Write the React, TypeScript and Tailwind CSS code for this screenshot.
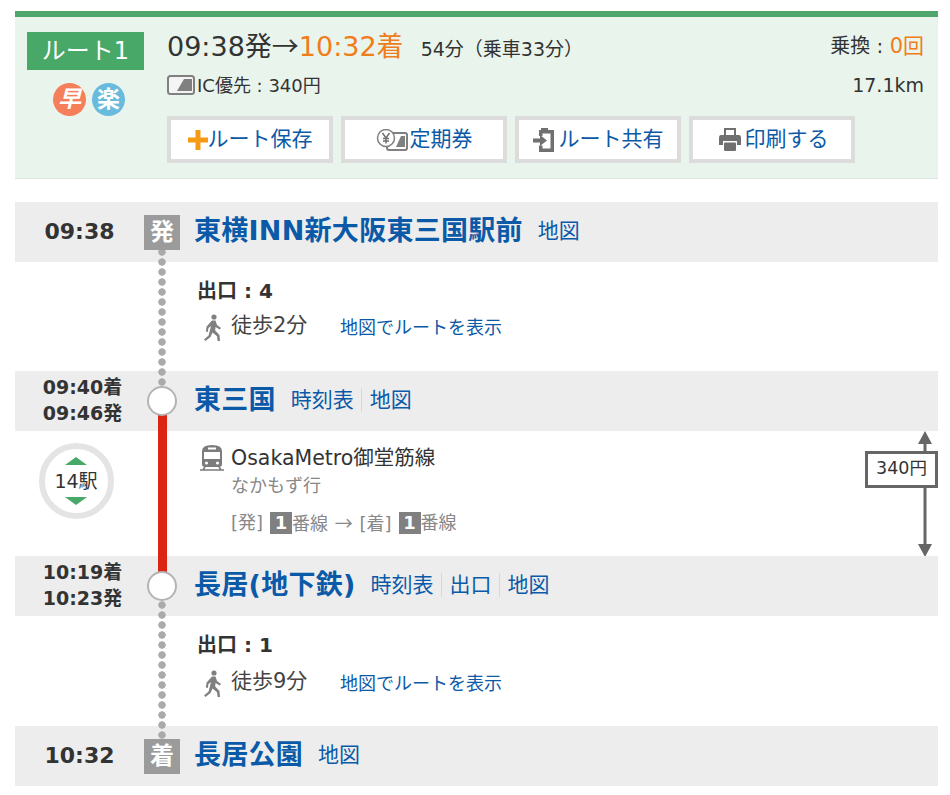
import { ReactNode } from 'react'

const font = "font-['DejaVu_Sans','Noto_Sans_CJK_JP',sans-serif]"
const cjk = "font-['Noto_Sans_CJK_JP',sans-serif]"
const link = 'text-[#0b5aa8]'

function IcCard({ className }: { className?: string }) {
  return (
    <svg viewBox="0 0 28 20" className={className}>
      <rect x="1" y="1" width="26" height="18" rx="2.5" fill="#f4f4f4" stroke="#808080" strokeWidth="2" />
      <path d="M10 16 L17 4 H25 V16 Z" fill="#808080" />
    </svg>
  )
}

function YenCard() {
  return (
    <svg viewBox="0 0 32 22" className="w-[32px] h-[22px]">
      <rect x="11" y="4" width="20" height="17" rx="2" fill="#fff" stroke="#808080" strokeWidth="2" />
      <path d="M20 18 L25 7 H29 V18 Z" fill="#808080" />
      <circle cx="10" cy="9" r="8.5" fill="#fff" stroke="#808080" strokeWidth="1.5" />
      <path d="M6.5 4 L10 9 L13.5 4 M10 9 V14.5 M7 9.5 H13 M7 12 H13" fill="none" stroke="#707070" strokeWidth="1.5" />
    </svg>
  )
}

function PlusIcon() {
  return (
    <svg viewBox="0 0 20 20" className="w-[20px] h-[20px]">
      <path d="M7.5 0 H12.5 V7.5 H20 V12.5 H12.5 V20 H7.5 V12.5 H0 V7.5 H7.5 Z" fill="#f59a14" />
    </svg>
  )
}

function ShareIcon() {
  return (
    <svg viewBox="0 0 21 24" className="w-[21px] h-[24px]">
      <path d="M6 2 H21 V24 H6 V17.5 H9.5 V20.5 H17.5 V5.5 H9.5 V8 H6 Z" fill="#707070" />
      <rect x="8" y="0" width="7" height="4" fill="#707070" />
      <path d="M0 10.5 H7 V7 L14 12.5 L7 18 V14.5 H0 Z" fill="#707070" />
    </svg>
  )
}

function PrinterIcon() {
  return (
    <svg viewBox="0 0 22 23" className="w-[22px] h-[23px]">
      <path d="M5 0 H17 V7 H20 Q22 7 22 10 V17 H18 V13 H4 V17 H0 V10 Q0 7 2 7 H5 Z" fill="#707070" />
      <rect x="7" y="2" width="8" height="5" fill="#fff" />
      <rect x="5" y="14.5" width="12" height="8.5" rx="1" fill="#707070" />
    </svg>
  )
}

function Walker() {
  return (
    <svg viewBox="0 0 18 27" className="w-[18px] h-[27px] shrink-0 mt-[3px] ml-[1px] -mr-[1px]" fill="#808080">
      <circle cx="10" cy="3" r="2.6" />
      <path d="M8 6.5 H11.5 L13 11 L17 14 L15.8 15.5 L11.5 13 L11.2 16.5 L15.5 21 L16 27 H13.6 L13 22.2 L8.6 18.5 L6.5 23 L1.5 27 L0 25.4 L4.6 21.5 L7 12 L4.5 14 L3.8 18 L1.8 17.6 L2.6 12.4 Z" />
    </svg>
  )
}

function Train() {
  return (
    <svg viewBox="0 0 24 27" className="w-[24px] h-[27px] shrink-0">
      <path d="M2 7 Q2 1 12 1 Q22 1 22 7 V20 Q22 23 19 23 H5 Q2 23 2 20 Z" fill="#7c7c7c" />
      <rect x="4" y="8" width="16" height="7" fill="#fff" />
      <rect x="8" y="3.5" width="8" height="2" fill="#fff" />
      <circle cx="6.5" cy="19" r="1.6" fill="#fff" />
      <circle cx="17.5" cy="19" r="1.6" fill="#fff" />
      <path d="M0 26 H24 M5 23 L3 26 M19 23 L21 26" stroke="#7c7c7c" strokeWidth="1.6" fill="none" />
    </svg>
  )
}

function HeaderButton({ icon, label, gap }: { icon: ReactNode; label: string; gap: string }) {
  return (
    <button className={`w-[166px] h-[47px] border-[4px] border-[#dcdcdc] bg-white flex items-center justify-center ${gap} text-[21px] ${link}`}>
      {icon}
      <span>{label}</span>
    </button>
  )
}

function Links({ items }: { items: string[] }) {
  return (
    <div className={`flex items-center text-[21px] ${link}`}>
      {items.map((item, i) => (
        <span key={item} className={i > 0 ? 'border-l border-[#d8d8d8] ml-[7px] pl-[8px] leading-[24px]' : 'leading-[24px]'}>
          {item}
        </span>
      ))}
    </div>
  )
}

function StationRow({ time, marker, name, links, twoLine }: { time: ReactNode; marker: ReactNode; name: string; links: string[]; twoLine?: boolean }) {
  return (
    <div className="relative h-[60px] bg-[#ededed] flex items-center">
      <div className={`w-[129px] pb-[2px] text-center font-bold text-[#333] ${twoLine ? 'pl-[6px] text-[19px] leading-[26px]' : 'text-[22px]'}`}>{time}</div>
      <div className="relative z-10 w-[36px] h-[35px] flex items-center justify-center">{marker}</div>
      <div className="ml-[14px] mr-[15px] pb-[2px] text-[27px] tracking-[0.01em] font-bold text-[#0b5aa8] whitespace-nowrap">{name}</div>
      <div className="pb-[2px]">
        <Links items={links} />
      </div>
    </div>
  )
}

function Square({ label }: { label: string }) {
  return (
    <div className="w-[36px] h-[35px] bg-[#9b9b9b] text-white text-[24px] font-bold flex items-center justify-center">
      {label}
    </div>
  )
}

function Ring() {
  return <div className="w-[30px] h-[30px] rounded-full bg-white border-2 border-[#b4b4b4]" />
}

function WalkSection({ exit, walk, height, dotsTop, gap }: { exit: string; walk: string; height: string; dotsTop: string; gap: string }) {
  return (
    <div className={`relative ${height} pl-[182px] pt-[15px]`}>
      <div className={`absolute z-[5] left-[143px] ${dotsTop} h-[140px] w-[8px] bg-[radial-gradient(circle,#aaaaaa_3.4px,transparent_4px)] bg-[length:8px_10px]`} />
      <div className="text-[20px] leading-[28px] font-bold text-[#333]">{exit}</div>
      <div className={`flex items-center ${gap} ml-[6px] h-[28px]`}>
        <Walker />
        <span className="ml-[10px] text-[21px] text-[#444] w-[109px]">{walk}</span>
        <span className={`pt-[2px] text-[18px] ${link}`}>地図でルートを表示</span>
      </div>
    </div>
  )
}

export default function App() {
  return (
    <div className={`min-h-[795px] w-[950px] bg-white pt-[11px] pl-[15px] pr-[12px] ${font} text-[#333]`}>
      {/* ROUTE SUMMARY */}
      <section className="h-[168px] border-t-[6px] border-t-[#4ea66c] border-b border-b-[#dde3de] bg-[#e9f5ec] flex pl-[12px] pr-[14px] pt-[15px]">
        <div className="w-[140px] shrink-0">
          <div className="w-[117px] h-[38px] bg-[#48a868] text-white text-[24px] flex items-center justify-center">
            ルート1
          </div>
          <div className="flex gap-[6px] mt-[13px] ml-[26px]">
            <div className="w-[33px] h-[33px] rounded-full bg-[#f57f5b] text-white text-[23px] font-bold italic flex items-center justify-center">
              早
            </div>
            <div className="w-[33px] h-[33px] rounded-full bg-[#68bbdc] text-white text-[23px] font-bold flex items-center justify-center">
              楽
            </div>
          </div>
        </div>

        <div className="flex-1">
          <div className="flex justify-between h-[30px] items-center">
            <div className="flex items-baseline">
              <span className="text-[27px] leading-[30px]">
                09:38発<span className={cjk}>→</span><span className="text-[#f07c1a]">10:32着</span>
              </span>
              <span className="ml-[17px] text-[19px]">54分（乗車33分）</span>
            </div>
            <div className="text-[20px]">
              乗換 : <span className="text-[21px] text-[#f07c1a]">0回</span>
            </div>
          </div>
          <div className="flex justify-between items-center h-[36px] mt-[5px]">
            <div className="flex items-center text-[18px]">
              <IcCard className="w-[28px] h-[20px] mr-[2px]" />
              <span>IC優先 : 340円</span>
            </div>
            <div className="text-[19px]">17.1km</div>
          </div>
          <div className="flex gap-[8px] mt-[13px]">
            <HeaderButton icon={<PlusIcon />} label="ルート保存" gap="gap-0" />
            <HeaderButton icon={<YenCard />} label="定期券" gap="gap-[2px]" />
            <HeaderButton icon={<ShareIcon />} label="ルート共有" gap="gap-[5px]" />
            <HeaderButton icon={<PrinterIcon />} label="印刷する" gap="gap-[4px] pl-[3px]" />
          </div>
        </div>
      </section>

      {/* ROUTE DETAIL */}
      <div className="mt-[23px]">
        <StationRow time="09:38" marker={<Square label="発" />} name="東横INN新大阪東三国駅前" links={['地図']} />
        <WalkSection exit="出口 : 4" walk="徒歩2分" height="h-[109px]" dotsTop="top-[-15px]" gap="mt-[7px]" />
        <StationRow
          twoLine
          time={<>09:40着<br />09:46発</>}
          marker={<Ring />}
          name="東三国"
          links={['時刻表', '地図']}
        />

        <div className="relative h-[125px] flex">
          <div className="absolute z-[5] left-[143px] top-[-16px] h-[160px] w-[9px] bg-[#dc2413]" />
          <div className="w-[129px] flex justify-center pt-[12px] pr-[7px]">
            <div className="w-[75px] h-[76px] rounded-full border-[6px] border-[#e4e4e4] flex flex-col items-center justify-center text-[19px] leading-[24px]">
              <div className="w-0 h-0 border-x-[11px] border-x-transparent border-b-[8px] border-b-[#48a868]" />
              <span className="my-[4px]">14駅</span>
              <div className="w-0 h-0 border-x-[11px] border-x-transparent border-t-[8px] border-t-[#48a868]" />
            </div>
          </div>
          <div className="ml-[56px] pt-[13px] flex">
            <Train />
            <div className="ml-[7px]">
              <div className="text-[20.5px] leading-[28px] text-[#333]">OsakaMetro御堂筋線</div>
              <div className="text-[18px] leading-[27px] text-[#888]">なかもず行</div>
              <div className="mt-[12px] text-[18px] leading-[22px] text-[#888] flex items-center whitespace-pre">
                <span>[発]</span>
                <span className="ml-[7px] w-[22px] h-[22px] bg-[#808080] text-white font-bold flex items-center justify-center">1</span>
                <span>番線 <span className={`${cjk} mx-[1px]`}>→</span> [着]</span>
                <span className="ml-[7px] w-[22px] h-[22px] bg-[#808080] text-white font-bold flex items-center justify-center">1</span>
                <span>番線</span>
              </div>
            </div>
          </div>

          {/* FARE */}
          <svg viewBox="0 0 14 126" className="absolute right-[6px] top-0 w-[14px] h-[126px]">
            <path d="M7 0 L14 13 H8.5 V113 H14 L7 126 L0 113 H5.5 V13 H0 Z" fill="#666666" />
          </svg>
          <div className="absolute right-0 top-[20px] w-[73px] h-[37px] border-[3px] border-[#666] bg-white text-[17.5px] pb-[3px] flex items-center justify-center">
            340円
          </div>
        </div>

        <StationRow
          twoLine
          time={<>10:19着<br />10:23発</>}
          marker={<Ring />}
          name="長居(地下鉄)"
          links={['時刻表', '出口', '地図']}
        />
        <WalkSection exit="出口 : 1" walk="徒歩9分" height="h-[110px]" dotsTop="top-[-16px]" gap="mt-[9px]" />
        <StationRow time="10:32" marker={<Square label="着" />} name="長居公園" links={['地図']} />
      </div>
    </div>
  )
}
